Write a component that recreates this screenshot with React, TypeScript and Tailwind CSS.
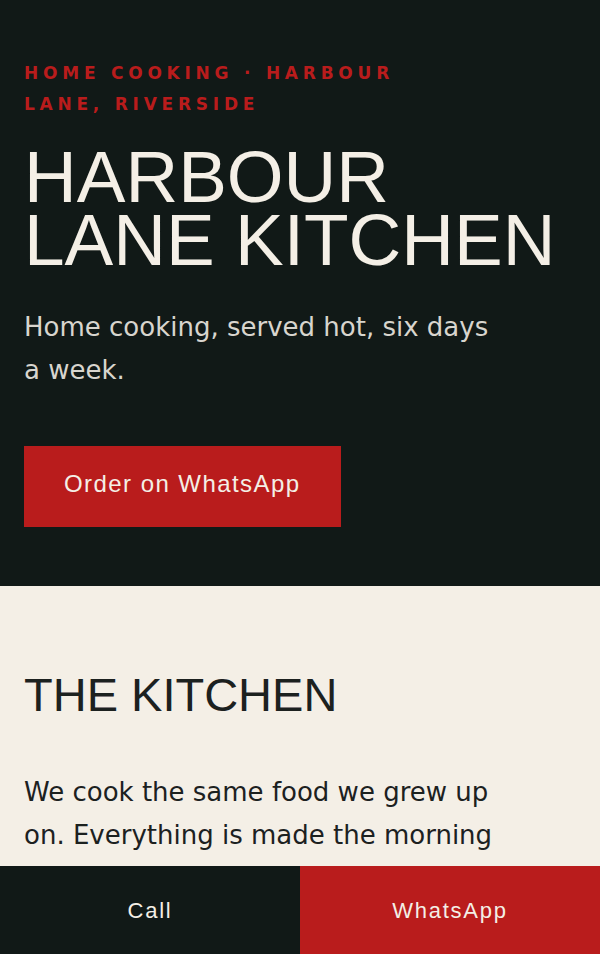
export default function App() {
  return (
    <div className="min-h-screen bg-[#f4efe6] pb-[88px] font-['DejaVu_Sans',sans-serif]">
      {/* hero */}
      <section className="bg-[#111917] px-6 pt-[58px] pb-[59px]">
        <p className="max-w-[400px] text-[17px] font-bold uppercase leading-[31px] tracking-[0.28em] text-[#b91c1c]">
          Home cooking · Harbour Lane, Riverside
        </p>
        <h1 className="mt-[25px] font-['Liberation_Sans',Arial,sans-serif] text-[73px] uppercase leading-[63px] text-[#f4efe6]">
          Harbour Lane Kitchen
        </h1>
        <p className="mt-[35px] max-w-[475px] text-[26px] leading-[43px] text-[#d8d5ce]">
          Home cooking, served hot, six days a week.
        </p>
        <a
          href="#"
          className="mt-[54px] inline-block bg-[#b91c1c] px-10 pt-[25px] pb-[31px] font-['Liberation_Sans',Arial,sans-serif] text-[24px] leading-[25px] tracking-[0.06em] text-[#f4efe6]"
        >
          Order on WhatsApp
        </a>
      </section>

      {/* about */}
      <section className="px-6 pt-[83px] pb-20 text-[#1c211f]">
        <h2 className="font-['Liberation_Sans',Arial,sans-serif] text-[47px] uppercase leading-[51px]">
          The Kitchen
        </h2>
        <p className="mt-[51px] max-w-[475px] text-[26px] leading-[43px]">
          We cook the same food we grew up on. Everything is made the morning
          you order it, in small batches, the way our families taught us.
        </p>
      </section>

      {/* bottom bar */}
      <div className="fixed inset-x-0 bottom-0 grid h-[88px] grid-cols-2 font-['Liberation_Sans',Arial,sans-serif] text-[22px] tracking-[0.08em] text-[#f4efe6]">
        <a href="#" className="flex items-center justify-center bg-[#111917]">
          Call
        </a>
        <a href="#" className="flex items-center justify-center bg-[#b91c1c]">
          WhatsApp
        </a>
      </div>
    </div>
  )
}
